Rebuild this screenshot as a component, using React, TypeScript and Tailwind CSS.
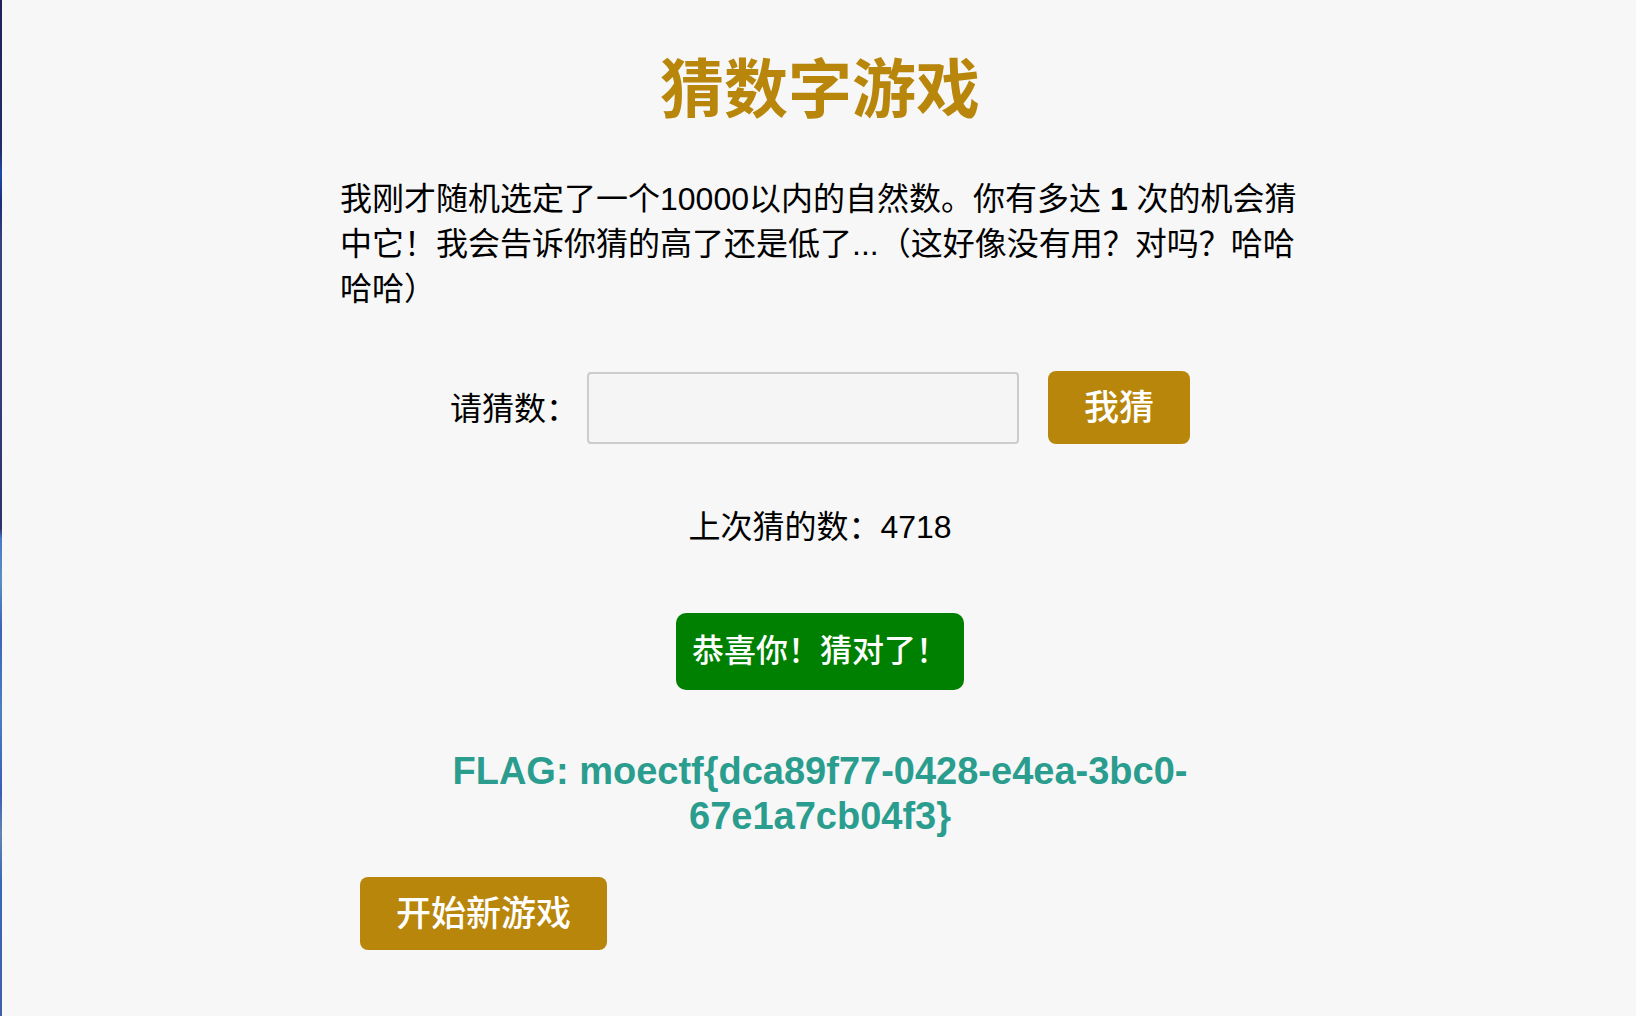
import { useState } from "react";

const FLAG = "moectf{dca89f77-0428-e4ea-3bc0-67e1a7cb04f3}";

export default function App() {
  const [guess, setGuess] = useState("");
  return (
    <div className="flex min-h-screen gap-[2px] bg-[#f7f7f7] font-['Liberation_Sans','Noto_Sans_CJK_SC',sans-serif] text-[32px] leading-[45px] text-black">
      <div className="w-[2px] shrink-0 bg-[linear-gradient(to_bottom,#232058_0%,#232c6c_15%,#1c4cab_17%,#1e2c78_20%,#38417f_24%,#353a7c_40%,#2d3268_52%,#4a78c8_53%,#5b8fc4_57%,#3d62ba_62%,#4a80c0_70%,#3a5cb8_78%,#6085b0_82%,#3a66b8_87%,#3f5fa8_100%)]" />
      <main className="mx-auto flex w-full max-w-[960px] flex-col">
        <h1 className="mt-[45px] text-center text-[64px] leading-[90px] font-bold text-[#b8860b]">猜数字游戏</h1>
        <p className="mt-[42px]">
          我刚才随机选定了一个10000以内的自然数。你有多达 <strong>1</strong> 次的机会猜中它！我会告诉你猜的高了还是低了...（这好像没有用？对吗？哈哈哈哈）
        </p>
        <form className="mt-[59px] flex items-center justify-center" onSubmit={(e) => e.preventDefault()}>
          <label htmlFor="guess" className="pt-[3px]">请猜数：</label>
          <input
            id="guess"
            value={guess}
            onChange={(e) => setGuess(e.target.value)}
            className="ml-[9px] h-[72px] w-[432px] rounded-[4px] border-2 border-[#cccccc] bg-[#f5f5f5] px-4"
          />
          <button type="submit" className="ml-[29px] h-[73px] rounded-[8px] bg-[#b8860b] px-9 text-[35px] font-medium text-white">我猜</button>
        </form>
        <p className="mt-[61px] text-center">上次猜的数：4718</p>
        <p className="mt-[63px] self-center rounded-[10px] bg-[#008000] px-4 py-4 font-medium text-white">恭喜你！猜对了！</p>
        <h2 className="mx-auto mt-[59px] max-w-[760px] text-center text-[38px] font-bold text-[#2a9d8f]">
          {`FLAG: ${FLAG}`}
        </h2>
        <button type="button" className="mt-[38px] ml-5 h-[73px] self-start rounded-[8px] bg-[#b8860b] px-9 text-[35px] font-medium text-white">开始新游戏</button>
      </main>
    </div>
  );
}
